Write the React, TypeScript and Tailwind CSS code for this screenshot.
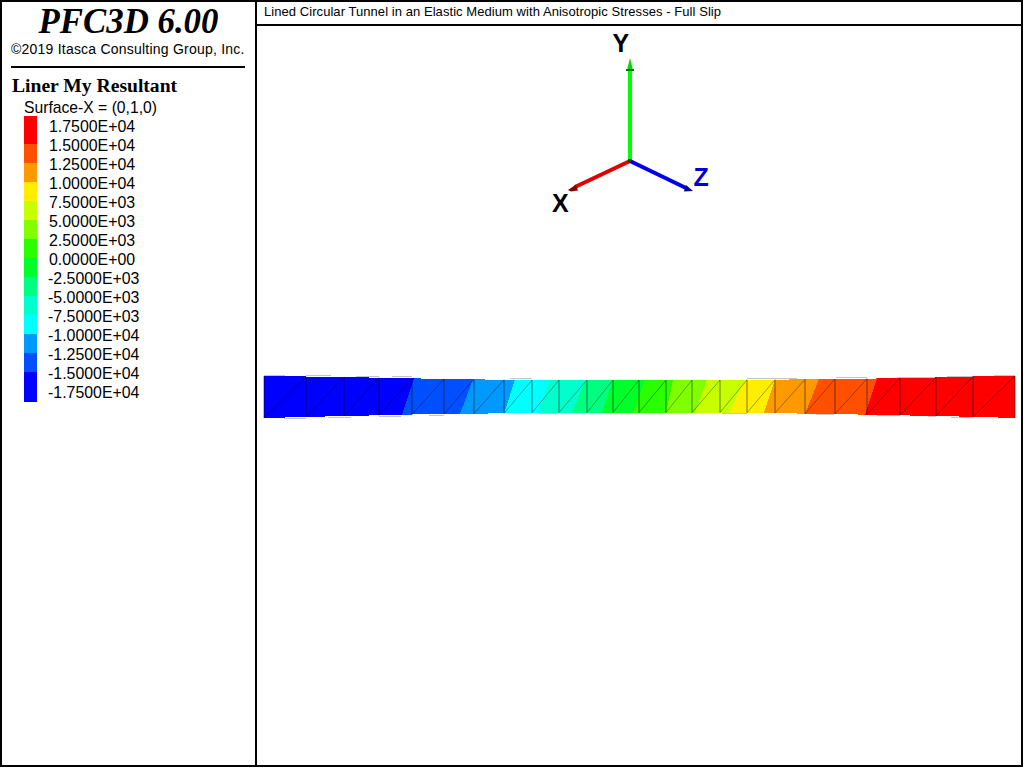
const legend: [string, string, number][] = [
  ["#ff0000", "1.7500E+04", 28],
  ["#ff5000", "1.5000E+04", 19],
  ["#ff9900", "1.2500E+04", 19],
  ["#ffee00", "1.0000E+04", 19],
  ["#c8ff00", "7.5000E+03", 19],
  ["#80ff00", "5.0000E+03", 19],
  ["#2aff00", "2.5000E+03", 19],
  ["#00ff2a", "0.0000E+00", 19],
  ["#00ff80", "-2.5000E+03", 19],
  ["#00ffcc", "-5.0000E+03", 19],
  ["#00ffff", "-7.5000E+03", 19],
  ["#0099ff", "-1.0000E+04", 19],
  ["#0050ff", "-1.2500E+04", 19],
  ["#0000ff", "-1.5000E+04", 30],
];
const labels = [...legend.map((l) => l[1]), "-1.7500E+04"];

// x, top y, bottom y of each mesh column edge
const cols: [number, number, number][] = [
  [264, 376, 418], [306, 376.5, 417], [344, 377, 416], [379, 377.7, 415.3], [412, 378.3, 414.5],
  [444, 379, 414], [474, 379.4, 413.7], [504, 379.7, 413.3], [532, 380, 412.8], [559, 380, 412.5],
  [587, 380, 412.5], [613, 380, 412.5], [639, 380, 412.5], [666, 380, 412.5], [692, 380, 412.5],
  [720, 380, 412.5], [747, 379.8, 412.8], [775, 379.7, 413], [805, 379.3, 413.7], [835, 379, 414],
  [867, 378.7, 414.7], [900, 378, 415.3], [936, 377.3, 416], [973, 376.3, 416.8], [1015, 376, 418],
];

const interp = (x: number, k: 1 | 2) => {
  for (let i = 0; i < cols.length - 1; i++) {
    const a = cols[i];
    const b = cols[i + 1];
    if (x <= b[0]) return a[k] + ((x - a[0]) / (b[0] - a[0])) * (b[k] - a[k]);
  }
  return cols[cols.length - 1][k];
};

// colour bands left to right, with boundary (top x, bottom x) at the right side of each
const bands: [string, number, number][] = [
  ["#0000ff", 414, 402],
  ["#0050ff", 473, 460],
  ["#0099ff", 515, 504],
  ["#00ffff", 550, 538],
  ["#00ffcc", 586, 572],
  ["#00ff80", 613, 602],
  ["#00ff2a", 645, 633],
  ["#2aff00", 673, 666],
  ["#80ff00", 707, 695],
  ["#c8ff00", 745, 730],
  ["#ffee00", 775, 764],
  ["#ff9900", 819, 805],
  ["#ff5000", 877, 865],
  ["#ff0000", 1015, 1015],
];

const bandPolys = bands.map((b, i) => {
  const prevT = i === 0 ? 264 : bands[i - 1][1];
  const prevB = i === 0 ? 264 : bands[i - 1][2];
  const xs = cols.map((c) => c[0]);
  const top = [prevT, ...xs.filter((x) => x > prevT && x < b[1]), b[1]].map((x) => `${x},${interp(x, 1)}`);
  const bot = [b[2], ...xs.filter((x) => x > prevB && x < b[2]).reverse(), prevB].map((x) => `${x},${interp(x, 2)}`);
  return { color: b[0], points: [...top, ...bot].join(" ") };
});

const greyTop: [number, number][] = [[264, 285], [306, 331], [356, 379], [392, 412], [510, 532], [747, 797], [836, 867], [897, 935], [947, 973], [994, 1015]];
const greyBot: [number, number][] = [[284, 306], [328, 351], [379, 401], [429, 444], [538, 556], [722, 747], [816, 834], [877, 900], [928, 936], [951, 973]];

function Band() {
  return (
    <svg width="1024" height="768" className="absolute left-0 top-0" viewBox="0 0 1024 768">
      {bandPolys.map((p) => (
        <polygon key={p.color} points={p.points} fill={p.color} shapeRendering="crispEdges" />
      ))}
      {greyTop.map(([a, b]) => (
        <rect key={a} x={a} y={Math.floor(interp(a, 1)) - 1} width={b - a} height="1" fill="#c4c4c4" />
      ))}
      {greyBot.map(([a, b]) => (
        <rect key={a} x={a} y={Math.ceil(interp(a, 2))} width={b - a} height="1" fill="#c4c4c4" />
      ))}
      {cols.map(([x, t, b], i) => (
        <g key={x} stroke="#000" strokeOpacity="0.5" strokeWidth="1">
          <line x1={x} y1={t} x2={x} y2={b} />
          {i > 0 && <line x1={x} y1={t} x2={cols[i - 1][0]} y2={cols[i - 1][2]} strokeWidth="0.7" />}
        </g>
      ))}
    </svg>
  );
}

function Axes() {
  return (
    <svg width="1024" height="768" className="absolute left-0 top-0" viewBox="0 0 1024 768">
      <rect x="628" y="68" width="4" height="93" fill="#00ff00" />
      <polygon points="630,58 633,70 627,70" fill="#00d800" />
      <rect x="626" y="69" width="8" height="2" fill="#007800" />
      <line x1="630" y1="161" x2="575" y2="187" stroke="#e00000" strokeWidth="4" />
      <polygon points="568,190 576,184.5 578,190.5 571,191.5" fill="#8a0000" />
      <line x1="630" y1="161" x2="686" y2="188" stroke="#0000e8" strokeWidth="4" />
      <polygon points="693,191 684,191.5 686,185" fill="#000090" />
      <rect x="628" y="159" width="3" height="3" fill="#204020" />
      <text x="612.5" y="52" fontFamily="'Liberation Sans', Arial, sans-serif" fontWeight="700" fontSize="25" fill="#000">Y</text>
      <text x="693.5" y="186" fontFamily="'Liberation Sans', Arial, sans-serif" fontWeight="700" fontSize="25" fill="#0000d0">Z</text>
      <text x="552" y="212" fontFamily="'Liberation Sans', Arial, sans-serif" fontWeight="700" fontSize="25" fill="#000">X</text>
    </svg>
  );
}

export default function App() {
  return (
    <div className="relative flex h-[768px] w-[1024px] overflow-hidden bg-white font-['Liberation_Sans',Arial,sans-serif] text-black">
      <div className="relative flex h-[767px] w-[1023px] border-2 border-black">
        <aside className="flex w-[253px] shrink-0 flex-col">
          <h1 className="mt-[1px] h-[38px] text-center font-['Liberation_Serif','Times_New_Roman',serif] text-[34.8px] font-bold italic leading-[38px]">
            PFC3D 6.00
          </h1>
          <p className="mt-[-1px] h-[18px] pl-[9px] text-[14px] leading-[18px] tracking-[0.22px]">©2019 Itasca Consulting Group, Inc.</p>
          <div className="ml-[9px] mt-[8px] h-[2px] w-[234px] bg-black" />
          <h2 className="ml-[10px] mt-[7px] h-[22px] font-['Liberation_Serif','Times_New_Roman',serif] text-[19.6px] font-bold leading-[22px]">
            Liner My Resultant
          </h2>
          <p className="ml-[22px] mt-[1px] h-[19px] text-[15.7px] leading-[19px]">Surface-X = (0,1,0)</p>
          <div className="ml-[22px] mt-[-1px] flex">
            <div className="flex w-[13px] flex-col">
              {legend.map(([color, label, h]) => (
                <div key={label} className="w-[13px]" style={{ backgroundColor: color, height: h }} />
              ))}
            </div>
            <div className="ml-[11px] mt-[1px] flex flex-col">
              {labels.map((l) => (
                <div key={l} className="h-[19px] text-[15.9px] leading-[19px]">
                  {l.startsWith("-") ? l : <span className="ml-[1px]">{l}</span>}
                </div>
              ))}
            </div>
          </div>
        </aside>
        <main className="flex min-w-0 flex-1 flex-col border-l-2 border-black">
          <div className="h-[24px] shrink-0 border-b-2 border-black pl-[7px] text-[13px] leading-[20px] tracking-[0.06px]">
            Lined Circular Tunnel in an Elastic Medium with Anisotropic Stresses - Full Slip
          </div>
          <div className="flex-1" />
        </main>
      </div>
      <div className="pointer-events-none absolute left-0 top-0 h-[768px] w-[1024px]">
        <Axes />
        <Band />
      </div>
    </div>
  );
}
